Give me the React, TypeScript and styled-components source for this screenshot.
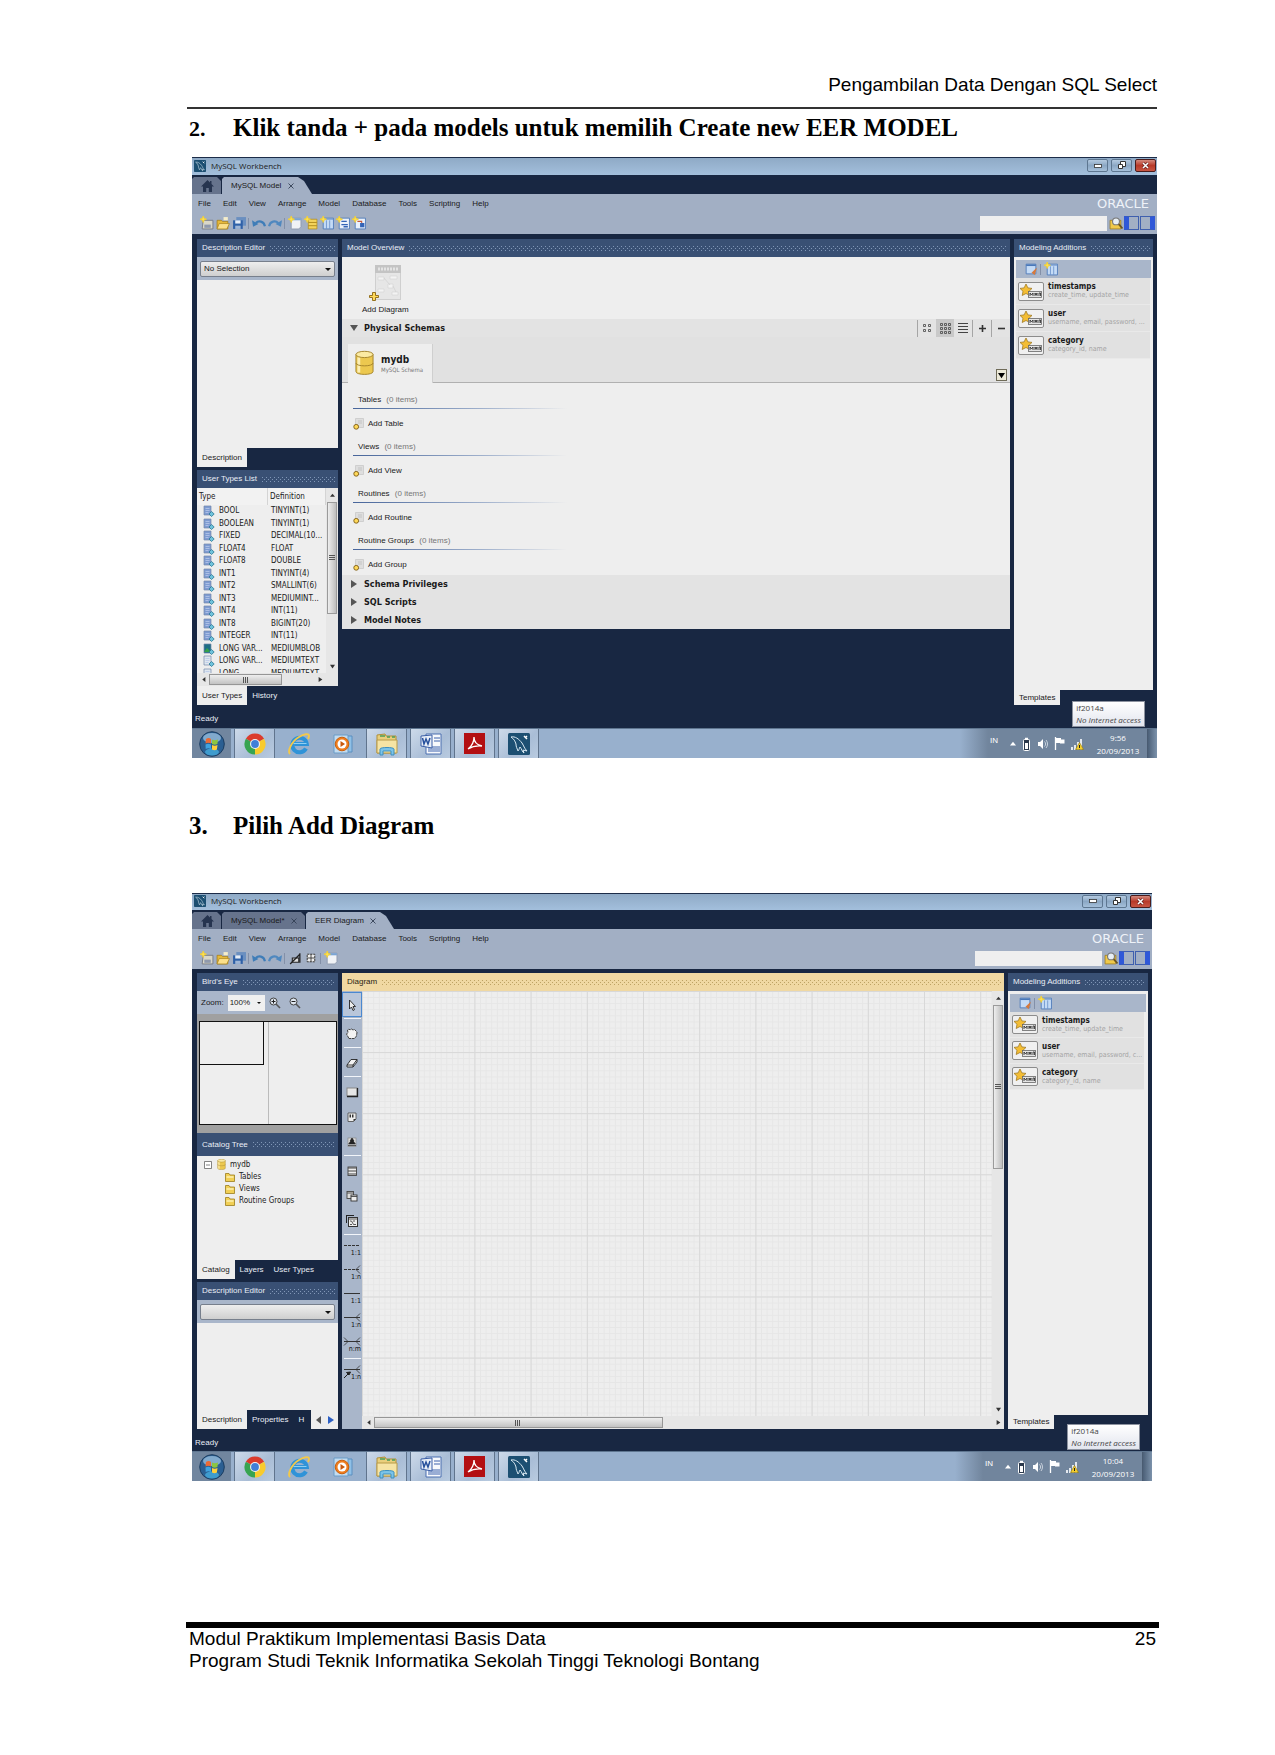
import React from "react";
import styled, { createGlobalStyle } from "styled-components";

const sans = `"Liberation Sans", Arial, sans-serif`;
const dialog = `"DejaVu Sans Condensed", "DejaVu Sans", sans-serif`;
const segoe = `"Open Sans", "Noto Sans", sans-serif`;

const Global = createGlobalStyle`
  *, *::before, *::after { box-sizing: border-box; }
  body { margin: 0; background: #fff; color: #000; }
  button, select, input { font: inherit; color: inherit; margin: 0; padding: 0; border: 0; background: none; border-radius: 0; }
  h2, p { margin: 0; }
  svg { display: block; flex: none; }
`;

/* ---------- document page ---------- */

const Page = styled.main`
  padding: 72px 118px 80px 187px;
  font-family: ${sans};
`;
const PageHeader = styled.header`
  height: 37px;
  border-bottom: 2px solid #333;
  text-align: right;
  font-size: 19px;
  line-height: 26px;
`;
const Step = styled.h2<{ $top: number; $bottom: number }>`
  display: flex;
  align-items: baseline;
  padding: ${(p) => p.$top}px 0 ${(p) => p.$bottom}px 2px;
  font: bold 25px/30px "Liberation Serif", "Times New Roman", serif;
`;
const StepNumber = styled.span<{ $small?: boolean }>`
  width: 44px;
  font-size: ${(p) => (p.$small ? 22 : 25)}px;
`;
const Figure = styled.figure<{ $right: number }>`
  margin: 0 ${(p) => p.$right}px 0 5px;
`;
const PageFooter = styled.footer`
  display: flex;
  justify-content: space-between;
  margin: 141px -2px 0 -1px;
  padding: 0 3px;
  border-top: 6px solid #000;
  font-size: 19px;
  line-height: 22px;
`;

/* ---------- application window ---------- */

const Window = styled.section`
  position: relative;
  background: #182742;
  font: 8px/12px ${sans};
  color: #1a1a1a;
`;
const TitleBar = styled.header<{ $height: number }>`
  display: flex;
  align-items: center;
  height: ${(p) => p.$height}px;
  padding: 0 1px 2px 2px;
  gap: 5px;
  border-top: 1px solid #1c2c48;
  background: linear-gradient(#8faac6, #a3bfdc);
  font: 8px/12px ${segoe};
`;
const WindowButtons = styled.div`
  display: flex;
  gap: 3px;
  margin-left: auto;
`;
const WindowButton = styled.button<{ $close?: boolean }>`
  display: grid;
  place-items: center;
  width: 21px;
  height: 13px;
  border: 1px solid ${(p) => (p.$close ? "#4a1c1c" : "#5d7690")};
  border-radius: 2px;
  background: ${(p) => (p.$close ? "linear-gradient(#d48a7e, #b83a2a 50%, #c75543)" : "linear-gradient(#b4cae0, #8ba7c4 50%, #a5c0da)")};
`;
const TabStrip = styled.nav`
  display: flex;
  align-items: flex-end;
  height: 19px;
  gap: 1px;
`;
const DocTab = styled.button<{ $active?: boolean; $width: number }>`
  display: flex;
  align-items: center;
  justify-content: space-between;
  width: ${(p) => p.$width}px;
  height: 17px;
  padding: 0 ${(p) => (p.$active ? 18 : 8)}px 0 9px;
  white-space: nowrap;
  background: ${(p) => (p.$active ? "#a2afc4" : "#66738c")};
  clip-path: ${(p) =>
    p.$active ? "polygon(0 2px, 2px 0, calc(100% - 14px) 0, calc(100% - 8px) 4px, 100% 100%, 0 100%)" : "polygon(0 2px, 2px 0, calc(100% - 4px) 0, 100% 4px, 100% 100%, 0 100%)"};
`;
const MenuBar = styled.nav`
  display: flex;
  align-items: center;
  height: 20px;
  padding-right: 8px;
  background: #a2afc4;
`;
const MenuItem = styled.button`
  padding: 0 6px;
`;
const Oracle = styled.span`
  margin-left: auto;
  font: 13px/16px "DejaVu Sans", sans-serif;
  color: #eef2f8;
`;
const Toolbar = styled.div`
  display: flex;
  align-items: center;
  height: 20px;
  padding: 0 2px 2px 8px;
  gap: 3px;
  background: #a2afc4;
`;
const ToolbarEnd = styled.div`
  display: flex;
  align-items: center;
  gap: 2px;
  margin-left: auto;
`;
const Divider = styled.i`
  width: 1px;
  height: 11px;
  background: #8390a8;
`;
const ToolButton = styled.button`
  display: grid;
  place-items: center;
  width: 13px;
  height: 14px;
`;
const Search = styled.input`
  width: 127px;
  height: 15px;
  padding: 0 4px;
  background: #efefef;
`;
const SideToggles = styled.div`
  display: flex;
  gap: 1px;
`;
const SideToggle = styled.button<{ $side: "left" | "right" }>`
  width: 15px;
  height: 14px;
  border: 1px solid #3f5fae;
  border-${(p) => p.$side}: 5px solid #2f58d8;
`;
const Workspace = styled.div<{ $top: number; $side: number }>`
  display: grid;
  grid-template-columns: 141px minmax(0, 1fr) ${(p) => p.$side}px;
  column-gap: 4px;
  align-items: start;
  padding: ${(p) => p.$top}px 4px 0 5px;
`;
const Column = styled.div`
  display: flex;
  flex-direction: column;
`;
const PanelTitle = styled.div<{ $gold?: boolean; $top?: number; $height?: number }>`
  display: flex;
  align-items: center;
  gap: 5px;
  height: ${(p) => p.$height ?? 18}px;
  margin-top: ${(p) => p.$top ?? 0}px;
  padding: 0 3px 0 5px;
  white-space: nowrap;
  color: ${(p) => (p.$gold ? "#2a2412" : "#e9eef6")};
  background: ${(p) => (p.$gold ? "#f0d8a2" : "#395074")};
  &::after {
    --dot: conic-gradient(from 270deg at 1px 1px, ${(p) => (p.$gold ? "#bda263" : "#8096b6")} 90deg, transparent 0);
    content: "";
    flex: 1;
    height: 5px;
    background: var(--dot) 0 0 / 4px 4px, var(--dot) 2px 2px / 4px 4px;
  }
`;
const Pane = styled.div<{ $height: number }>`
  height: ${(p) => p.$height}px;
  background: #eee;
`;
const SelectBar = styled.div`
  display: flex;
  height: 23px;
  padding: 4px 3px 3px;
  background: #a9b6ca;
`;
const WideSelect = styled.select`
  appearance: none;
  flex: 1;
  padding: 0 3px;
  border: 1px solid #777f8c;
  border-radius: 2px;
  background: url("data:image/svg+xml,%3Csvg xmlns='http://www.w3.org/2000/svg' width='6' height='3'%3E%3Cpath d='M0 0h6L3 3z' fill='%23111'/%3E%3C/svg%3E") no-repeat right 3px center,
    linear-gradient(#eee, #cfcfcf);
`;
const ZoomSelect = styled.select`
  appearance: none;
  width: 37px;
  height: 16px;
  padding: 0 2px;
  background: url("data:image/svg+xml,%3Csvg xmlns='http://www.w3.org/2000/svg' width='4' height='2'%3E%3Cpath d='M0 0h4L2 2z' fill='%23111'/%3E%3C/svg%3E") no-repeat right 4px center,
    #f0f0f0;
`;
const ZoomBar = styled.div`
  display: flex;
  align-items: center;
  height: 23px;
  padding: 0 4px;
  gap: 4px;
  background: #a9b6ca;
  button + button { margin-left: 4px; }
`;
const BottomTabs = styled.div`
  display: flex;
  height: 19px;
`;
const BottomTab = styled.button<{ $active?: boolean; $height?: number }>`
  height: ${(p) => p.$height ?? 19}px;
  padding: 0 5px;
  white-space: nowrap;
  color: ${(p) => (p.$active ? "#1a1a1a" : "#e9eef6")};
  background: ${(p) => (p.$active ? "#eee" : "transparent")};
`;
const TabScroller = styled.div`
  display: flex;
  align-items: center;
  justify-content: space-around;
  width: 27px;
  margin-left: auto;
  background: #eee;
`;
const StatusBar = styled.div<{ $height: number }>`
  height: ${(p) => p.$height}px;
  padding: 8px 3px 0;
  color: #e9eef6;
`;

/* ---------- user type table ---------- */

const TypesBox = styled.div`
  display: grid;
  grid-template-columns: 129px 12px;
  height: 185px;
  background: #eee;
`;
const TypesClip = styled.div`
  height: 185px;
  overflow: hidden;
`;
const TypesTable = styled.table`
  width: 129px;
  height: 192px;
  border-spacing: 0;
  table-layout: fixed;
  font: 8px/12px ${dialog};
  th { height: 17px; padding: 0 0 0 2px; text-align: left; font-weight: normal; border-right: 1px solid #d4d4d4; background: #f2f2f2; }
  th:first-child { width: 71px; }
  td { padding: 0 0 0 3px; white-space: nowrap; overflow: hidden; }
`;
const TypeName = styled.span`
  display: flex;
  align-items: center;
  gap: 4px;
  padding-left: 3px;
`;
const VTrack = styled.div`
  display: flex;
  flex-direction: column;
  align-items: center;
  justify-content: space-between;
  background: #e6e6e6;
`;
const VThumb = styled.div<{ $height: number }>`
  display: grid;
  place-items: center;
  width: 10px;
  height: ${(p) => p.$height}px;
  border: 1px solid #9b9b9b;
  background: linear-gradient(90deg, #eee, #bdbdbd);
`;
const ThumbGroup = styled.div`
  display: flex;
  flex-direction: column;
  align-items: center;
`;
const ArrowCell = styled.button<{ $w?: number }>`
  display: grid;
  place-items: center;
  width: ${(p) => p.$w ?? 12}px;
  height: 14px;
`;
const HTrack = styled.div`
  display: flex;
  align-items: center;
  height: 13px;
  background: #e6e6e6;
`;
const HThumb = styled.div<{ $width: string }>`
  display: grid;
  place-items: center;
  width: ${(p) => p.$width};
  height: 11px;
  border: 1px solid #969696;
  background: linear-gradient(#eee, #c2c2c2);
`;
const Spacer = styled.span`
  flex: 1;
`;

/* ---------- model overview ---------- */

const Overview = styled.div`
  background: #eee;
`;
const AddDiagram = styled.button`
  display: flex;
  flex-direction: column;
  align-items: center;
  height: 62px;
  padding: 8px 0 0 20px;
  gap: 3px;
`;
const SectionBar = styled.div`
  display: flex;
  align-items: center;
  height: 18px;
  padding-left: 8px;
  background: #e3e3e3;
`;
const SectionToggle = styled.button`
  display: flex;
  align-items: center;
  gap: 6px;
  font: bold 9px/12px ${dialog};
`;
const ViewModes = styled.div`
  display: flex;
  align-items: center;
  height: 18px;
  margin-left: auto;
`;
const ViewMode = styled.button<{ $on?: boolean }>`
  display: grid;
  place-items: center;
  width: 18px;
  height: 18px;
  background: ${(p) => (p.$on ? "#c9c9c9" : "none")};
`;
const Rule = styled.i`
  width: 1px;
  height: 17px;
  background: #a5a5a5;
`;
const SchemaStrip = styled.div`
  display: flex;
  align-items: flex-end;
  justify-content: space-between;
  height: 46px;
  padding: 0 3px 0 6px;
  border-bottom: 1px solid #b0b0b0;
  background: #e1e1e1;
`;
const SchemaTab = styled.button`
  display: flex;
  align-items: center;
  gap: 7px;
  width: 85px;
  height: 39px;
  margin-bottom: -1px;
  padding: 0 0 2px 7px;
  text-align: left;
  white-space: nowrap;
  border-right: 1px solid #cfcfcf;
  background: #eee;
  b { display: block; padding-top: 2px; font: bold 10px/12px ${dialog}; }
  small { display: block; font: 6px/8px ${dialog}; color: #777; }
`;
const DropButton = styled.button`
  display: grid;
  place-items: center;
  width: 11px;
  height: 12px;
  margin-bottom: 1px;
  border: 1px solid #6f6b58;
  background: #ece9d8;
`;
const ObjectGroups = styled.div`
  padding: 4px 11px 0;
`;
const ObjectGroup = styled.div`
  height: 47px;
`;
const GroupTitle = styled.div`
  height: 22px;
  padding: 7px 5px 0;
  background: linear-gradient(90deg, #47659a, #9fb0cc 60%, #eee) left bottom / 214px 1px no-repeat;
  span { margin-left: 3px; color: #777; }
`;
const AddItem = styled.button`
  display: flex;
  align-items: center;
  gap: 4px;
  height: 20px;
  margin-top: 5px;
`;

/* ---------- modeling additions ---------- */

const Additions = styled.div<{ $height: number }>`
  height: ${(p) => p.$height}px;
  padding: 3px 2px 0;
  background: #eee;
`;
const AdditionTools = styled.div`
  display: flex;
  align-items: center;
  gap: 3px;
  height: 18px;
  padding-left: 8px;
  background: #a9b6ca;
`;
const Addition = styled.button<{ $height: number }>`
  display: flex;
  align-items: center;
  gap: 4px;
  width: 134px;
  height: ${(p) => p.$height}px;
  padding: 0 0 0 2px;
  text-align: left;
  border-bottom: 1px solid #e9e9e9;
  background: #e1e1e1;
  b { display: block; font: bold 8px/9px ${dialog}; }
  small { display: block; font: 7px/9px ${dialog}; color: #a4a4a4; white-space: nowrap; }
`;

/* ---------- diagram editor ---------- */

const BirdsEye = styled.div`
  height: 119px;
  padding: 7px 1px 8px 2px;
  background: #a0a0a0;
`;
const BirdsCanvas = styled.div`
  display: grid;
  grid-template-columns: 1fr 1fr;
  height: 104px;
  border: 1px solid #111;
  background: #eee;
  &::after { content: ""; border-left: 1px solid #bbb; }
`;
const BirdsView = styled.div`
  width: 64px;
  height: 43px;
  border-right: 1px solid #111;
  border-bottom: 1px solid #111;
`;
const Tree = styled.ul`
  height: 104px;
  margin: 0;
  padding: 2px 6px;
  list-style: none;
  background: #eee;
  font: 8px/12px ${dialog};
`;
const TreeRow = styled.li<{ $level: number }>`
  display: flex;
  align-items: center;
  gap: 4px;
  height: ${(p) => (p.$level ? 12 : 13)}px;
  padding-left: ${(p) => p.$level * 22}px;
`;
const Diagram = styled.div`
  display: grid;
  grid-template-columns: 20px minmax(0, 1fr);
  height: 438px;
`;
const Palette = styled.div`
  padding-top: 1px;
  background: #a9b6ca;
`;
const PaletteTool = styled.button<{ $on?: boolean; $relation?: boolean }>`
  display: grid;
  place-items: center;
  width: 20px;
  height: ${(p) => (p.$relation ? 24 : 25)}px;
  ${(p) => p.$on && "border: 1px solid #4a88d0; background: #b9c6da;"}
`;
const PaletteRule = styled.hr`
  height: 1px;
  margin: 1px 1px 2px 2px;
  border: 0;
  background: #f2f5fa;
`;
const CanvasArea = styled.div`
  display: grid;
  grid-template-columns: minmax(0, 1fr) 12px;
  grid-template-rows: minmax(0, 1fr) 13px;
  background: #e6e6e6;
  ${HTrack} { grid-column: 1 / 3; }
`;
const Canvas = styled.div`
  background: #eee;
  overflow: hidden;
  svg { width: 100%; height: 100%; }
`;

/* ---------- windows taskbar ---------- */

const Taskbar = styled.footer`
  display: flex;
  height: 30px;
  border-top: 1px solid #5f7690;
  background: #98b0cd;
`;
const StartButton = styled.button`
  display: grid;
  place-items: center;
  width: 39px;
  height: 29px;
  margin-right: 3px;
  background: #71869f;
`;
const TaskButton = styled.button<{ $open?: boolean }>`
  display: grid;
  place-items: center;
  width: 41px;
  height: 29px;
  margin-right: 3px;
  ${(p) => p.$open && "border: 1px solid #60748d; border-width: 0 1px; background: linear-gradient(135deg, #cddaea, #a9bdd6 60%, #b9cbe0);"}
`;
const Tray = styled.div`
  display: flex;
  align-items: center;
  gap: 6px;
  margin-left: auto;
  padding-left: 30px;
  background: linear-gradient(90deg, #98b0cd, #71859d 28px);
  color: #fff;
`;
const Language = styled.span`
  padding: 0 6px 6px 0;
`;
const Clock = styled.time`
  width: 46px;
  margin-left: 5px;
  text-align: center;
  font: 8px/13px ${segoe};
`;
const ShowDesktop = styled.button`
  width: 10px;
  height: 29px;
  border-left: 1px solid #4a5c72;
  background: linear-gradient(90deg, #4c6078, #7c92ab);
`;
const NetworkTip = styled.div`
  position: absolute;
  right: 12px;
  bottom: 31px;
  padding: 0 3px;
  border: 1px solid #8d93a0;
  background: linear-gradient(#fff, #e2e5ee);
  color: #444;
  font: 8px/12px ${segoe};
  white-space: nowrap;
`;

/* ---------- drawings ---------- */

const Dolphin = ({ size }: { size: number }) => (
  <svg width={size} height={size} viewBox="0 0 22 22">
    <rect width="22" height="22" rx="1.500" fill="#1c4f72" />
    <path d="M3 4c4-1 8 2 11 6 2 3 2 5 5 8l-4-1 1 3c-2-1-2-4-4-6-1 2-1 3-2 4-1-3-2-4-2-7C7 8 6 6 3 4z" fill="none" stroke="#d9e9f2" strokeWidth="1" />
    <path d="M16 3l3 3M17 5l2-2" stroke="#fff" strokeWidth="1.500" />
  </svg>
);
const Home = () => (
  <svg width="13" height="12" viewBox="0 0 13 12"><path d="M6.500 0L0 6.500h2V12h3.200V8h2.600v4H11V6.500h2L10.500 4V1H9v1.500z" fill="#26344f" /></svg>
);
const Cross = () => (
  <svg width="6" height="6" viewBox="0 0 6 6"><path d="M.5.5l5 5M5.500.5l-5 5" stroke="#333f55" strokeWidth=".9" /></svg>
);
const Spark = () => <path d="M3 0l.8 2.200L6 3l-2.200.8L3 6l-.8-2.200L0 3l2.200-.8z" fill="#ffe14d" stroke="#f2cf35" strokeWidth=".8" />;

type Glyph = "new" | "open" | "save" | "undo" | "redo" | "page" | "schema" | "table" | "view" | "routine" | "pen" | "grid" | "find" | "edit";
const glyphs: Record<Glyph, React.ReactNode> = {
  new: <><path d="M3 4h9v8H2z" fill="#d9d7c8" stroke="#6f7380" strokeWidth=".8" /><path d="M4 8h6v3H4z" fill="#8f99ad" /><Spark /></>,
  open: <><path d="M1 4h4l1 1h5v7H1z" fill="#e6b93a" stroke="#a47c16" strokeWidth=".7" /><path d="M3 7h9.500l-2.500 5H1z" fill="#fbe08a" stroke="#a47c16" strokeWidth=".6" /><path d="M7 1h4v3H7z" fill="#f5edca" /></>,
  save: <><rect x="4" y="1" width="9" height="8" fill="#6a8fc0" /><path d="M1 4h9v8H1z" fill="#2f61a8" /><path d="M3 4h5v3H3z" fill="#e5edf7" /><path d="M3 9h5v3H3z" fill="#9fb6d6" /></>,
  undo: <><path d="M12 9.500C11 4.500 6 4 3.500 6.500" fill="none" stroke="#3f7db8" strokeWidth="2" /><path d="M0 4l1 6 5-2.500z" fill="#3f7db8" /></>,
  redo: <><path d="M1 9.500C2 4.500 7 4 9.500 6.500" fill="none" stroke="#4f88bf" strokeWidth="2" /><path d="M13 4l-1 6-5-2.500z" fill="#4f88bf" /></>,
  page: <><path d="M3 2h9v8l-2 2H3z" fill="#f1f3f6" stroke="#8793a8" strokeWidth=".7" /><path d="M3 2h9v2H3z" fill="#7ba4d3" /><Spark /></>,
  schema: <><path d="M4 3h8v9H4z" fill="#f3d35a" stroke="#b28c1e" strokeWidth=".7" /><path d="M4 6h8M4 9h8" stroke="#b28c1e" strokeWidth=".9" /><Spark /></>,
  table: <><path d="M3 2h9.500v10H3z" fill="#c4dbf6" stroke="#4a78b8" strokeWidth=".8" /><path d="M3 3h9.500M6 4v8M9 4v8" stroke="#6c93cb" strokeWidth=".8" /><Spark /></>,
  view: <><path d="M3 2h9.500v10H3z" fill="#eaf1fb" stroke="#4a78b8" strokeWidth=".8" /><path d="M5 5h5M5 8h6M7 10h4" stroke="#3464b6" strokeWidth="1.300" /><Spark /></>,
  routine: <><path d="M3 2h9.500v10H3z" fill="#eaf1fb" stroke="#4a78b8" strokeWidth=".8" /><path d="M5 5h4v2" fill="none" stroke="#c45a3a" /><rect x="7.500" y="6.500" width="4" height="4" fill="#3464b6" /><Spark /></>,
  pen: <><path d="M4 6.500h6v4H4z" fill="#ddd" stroke="#222" /><path d="M2 12l9-9M11 2v9" fill="none" stroke="#222" strokeWidth="1.200" /></>,
  grid: <><path d="M3 3h7v7H3z" fill="#eee" stroke="#333" strokeWidth=".9" strokeDasharray="2 .8" /><path d="M6.500 3v7M3 6.500h7" stroke="#333" strokeWidth=".8" /></>,
  find: <><path d="M1 4h10v8H1z" fill="#f0c94a" stroke="#9c7a1a" strokeWidth=".7" /><circle cx="6.500" cy="5" r="3.200" fill="#e7eff5" stroke="#777" /><path d="M9 7.500l3.500 4" stroke="#6b5520" strokeWidth="1.600" /></>,
  edit: <><path d="M2 2h9v9H2z" fill="#c4dbf6" stroke="#4a78b8" strokeWidth=".8" /><path d="M2 3h9" stroke="#4a78b8" strokeWidth="1.500" /><path d="M12 5L7 10l3 2z" fill="#d7793b" /></>,
};
const Tool = ({ name, label }: { name: Glyph; label: string }) => (
  <ToolButton aria-label={label}><svg width="14" height="14" viewBox="0 0 13 13">{glyphs[name]}</svg></ToolButton>
);
const Tri = ({ dir, size = 5, color = "#333" }: { dir: "up" | "down" | "left" | "right"; size?: number; color?: string }) => {
  const d = { up: "M0 6L4 1l4 5z", down: "M0 1h8L4 7z", left: "M7 0v8L2 4z", right: "M1 0v8l6-4z" }[dir];
  return <svg width={size} height={size} viewBox="0 0 8 8"><path d={d} fill={color} /></svg>;
};
const Grip = ({ vertical }: { vertical?: boolean }) => (
  <svg width="6" height="6" viewBox="0 0 6 6"><path d={vertical ? "M0 .5h6M0 2.500h6M0 4.500h6" : "M.5 0v6M2.500 0v6M4.500 0v6"} stroke="#555" strokeWidth="1" /></svg>
);
const DiagramSheet = () => (
  <svg width="34" height="36" viewBox="0 0 34 36">
    <rect x="7.500" y=".5" width="25" height="34" fill="#e6e6e6" stroke="#cfcfcf" />
    <rect x="7" y="0" width="26" height="8" fill="#c4c4c4" />
    <path d="M10 4h20" stroke="#e4e4e4" strokeWidth="3" strokeDasharray="2 1" />
    <path d="M10 12h6v3h-6zM22 11h7v3h-7zM20 19h5v4h-5zM10 24h6v3h-6zM24 27h6v3h-6z" fill="#f3f3f3" stroke="#d3d3d3" strokeWidth=".6" />
    <path d="M16 13l6 7M25 21l3 6" stroke="#d0d0d0" strokeWidth=".7" />
    <path d="M4.500 28.500h3v3h3v2h-3v3h-3v-3h-3v-2h3z" fill="#ffd95a" stroke="#8a6410" strokeWidth=".9" transform="translate(0 -1)" />
  </svg>
);
const Cylinder = ({ width, height }: { width: number; height: number }) => (
  <svg width={width} height={height} viewBox="0 0 20 26">
    <path d="M1 4v18c0 4 18 4 18 0V4z" fill="#ecc84f" stroke="#a4842a" />
    <path d="M4 7v16" stroke="#fbeeb5" strokeWidth="3" />
    <ellipse cx="10" cy="4" rx="9" ry="3.300" fill="#fbeaa2" stroke="#a4842a" />
    <path d="M1 13c0 4 18 4 18 0" fill="none" stroke="#a4842a" />
  </svg>
);
const AddMark = () => (
  <svg width="11" height="12" viewBox="0 0 11 12">
    <path d="M2.500.5h8v9h-8z" fill="#dedede" stroke="#cfcfcf" /><path d="M5 3h4M5 5h4" stroke="#c4c4c4" />
    <circle cx="3.200" cy="8.800" r="2.400" fill="#ffd95a" stroke="#7d5a10" strokeWidth=".9" />
  </svg>
);
const TypeMark = ({ kind }: { kind: string }) => (
  <svg width="12" height="12" viewBox="0 0 12 12">
    <path d="M1 1h7v9H1z" fill={kind === "blob" ? "#1f6f86" : kind === "text" ? "#dfe7ef" : "#7f9cd2"} stroke="#7488ab" strokeWidth=".7" />
    {kind === "blob" ? <path d="M1 9l3-4 4 4z" fill="#37a24a" /> : <path d="M2.500 3.500h4M2.500 5.500h4M2.500 7.500h3" stroke="#b7c8e8" strokeWidth=".8" />}
    <path d="M8.500 6.500l2.700 2.500-2.700 2.500L6 9z" fill="#6fc3dc" stroke="#1d6f8c" strokeWidth=".7" />
  </svg>
);
const StarCard = () => (
  <svg width="26" height="19" viewBox="0 0 26 19">
    <rect x=".5" y=".5" width="25" height="18" rx="1.500" fill="#f0f0f0" stroke="#8c8c8c" />
    <path d="M8 2l1.900 3.900 4.100.5-3 2.900.8 4.200L8 11.500l-3.800 2 .8-4.200-3-2.900 4.100-.5z" fill="#f3bd35" stroke="#966e14" strokeWidth=".7" />
    <rect x="10.500" y="9.500" width="13" height="6" fill="#e4e4e4" stroke="#666" strokeWidth=".8" />
    <path d="M12 14v-3l1.500 2 1.500-2v3M17 14v-3l1 2 1-2v3M21 14v-3h1.500v3" fill="none" stroke="#222" strokeWidth=".8" />
  </svg>
);
const Magnifier = ({ plus }: { plus?: boolean }) => (
  <svg width="12" height="12" viewBox="0 0 12 12"><circle cx="4.500" cy="4.500" r="3.500" fill="#dfe6ef" stroke="#444" /><path d={plus ? "M2.500 4.500h4M4.500 2.500v4" : "M2.500 4.500h4"} stroke="#222" /><path d="M7 7l4 4" stroke="#555" strokeWidth="1.600" /></svg>
);
const Folder = () => (
  <svg width="10" height="10" viewBox="0 0 10 10"><path d="M.5 1.500h3.500l1 1.500h4.500v6.500h-9z" fill="#f1cf55" stroke="#9a7c1c" strokeWidth=".8" /><path d="M1.500 5h7" stroke="#fdf0b0" strokeWidth="1.500" /></svg>
);

const paletteDrawings: React.ReactNode[] = [
  <path d="M5.500 3v9l2-2 1.500 3.500 1.500-.8L9 9.500h2.500z" fill="#eee" stroke="#222" strokeWidth=".9" />,
  <path d="M5 12.500L2.500 8l1.500-1.500L3.500 4 5 3l1 1 1.500-1L9 4l1.500-.5L12 5l1 1-.5 4-2 2.500z" fill="#f3f3f3" stroke="#333" strokeWidth=".9" strokeDasharray="3 .6" />,
  <path d="M3 10l4-5.500h6L9 10zM3 10v2h6v-2M9 12l4-5V4.500" fill="#f3f3f3" stroke="#222" strokeWidth=".9" />,
  <><rect x="3" y="4" width="10" height="8" fill="#e6e6e6" stroke="#888" /><path d="M3 12.500h10.500V4" stroke="#222" strokeWidth="1.300" fill="none" /></>,
  <><path d="M4 4h8v6l-2.500 2.500H4z" fill="#eee" stroke="#555" strokeWidth=".9" /><path d="M5.500 5.500h1.500v3H5.500zM8 5.500h1.500v3H8zM9.500 12.500V10H12" fill="#333" /></>,
  <><rect x="4" y="4" width="8" height="8.500" fill="#ddd" stroke="#888" strokeWidth=".7" /><path d="M8 4l2 3H9.300l2 3H4.700l2-3H6zM4 11.500h8" fill="#222" stroke="#222" strokeWidth=".7" /></>,
  <><rect x="4" y="4" width="8.500" height="8.500" fill="#eee" stroke="#444" strokeWidth=".9" /><path d="M4 5h8.500M4 8h8.500M4 11h8.500" stroke="#444" /></>,
  <><rect x="3" y="3.500" width="6.500" height="7" fill="#ddd" stroke="#444" strokeWidth=".9" /><rect x="7" y="7" width="6" height="6" fill="#eee" stroke="#333" strokeWidth=".9" /><path d="M7 8.500h6M3 5h6" stroke="#444" strokeWidth=".9" /></>,
  <><path d="M2 2.500h8M2.500 2v8" stroke="#222" /><rect x="4.500" y="4.500" width="9" height="9" fill="#eee" stroke="#333" /><path d="M4.500 6h9M6 8h1.500l2 3.500H12M6 11.500h2M9 8h2" stroke="#333" strokeWidth=".8" fill="none" /></>,
];
type Relation = { label: string; dashed?: boolean; many?: boolean; both?: boolean; picker?: boolean };
const relations: Relation[] = [
  { label: "1:1", dashed: true },
  { label: "1:n", dashed: true, many: true },
  { label: "1:1" },
  { label: "1:n", many: true },
  { label: "n:m", many: true, both: true },
];
const RelationMark = ({ label, dashed, many, both, picker }: Relation) => (
  <svg width="18" height="18" viewBox="0 0 18 18">
    <path d="M1 5.500h16" stroke="#333" strokeWidth="1" strokeDasharray={dashed ? "3 1" : undefined} />
    {many && <path d="M17 1.500l-4 4 4 4" fill="none" stroke="#333" strokeWidth=".8" />}
    {both && <path d="M1 1.500l4 4-4 4" fill="none" stroke="#333" strokeWidth=".8" />}
    {picker && <path d="M1 14l4-4M3.500 8.500L6 11l1.500-3z" stroke="#222" fill="#222" />}
    <text x="18" y="15" textAnchor="end" fontFamily="DejaVu Sans Condensed, sans-serif" fontSize="7" fill="#111">{label}</text>
  </svg>
);

const Orb = () => (
  <svg width="26" height="26" viewBox="0 0 26 26">
    <circle cx="13" cy="13" r="12.300" fill="#2b5f92" stroke="#1d3d60" /><ellipse cx="13" cy="7" rx="9" ry="5" fill="#9fc3e0" opacity=".75" /><ellipse cx="13" cy="21" rx="7" ry="3.500" fill="#49b6e8" opacity=".7" />
    <path d="M7 8c2-1.300 3.500-1.200 5 0v4.500c-1.800-1-3.500-1-5.500 0z" fill="#ea6a35" /><path d="M13 8.500c2 1 3.500 1 6 0l-.6 4.500c-2 1-3.500 1-5.400 0z" fill="#8cc63f" />
    <path d="M6.500 13.500c2-1.200 3.700-1 5.500 0V18c-1.800-1-3.500-1-5.300 0z" fill="#3fa3e0" /><path d="M13 14c2 1 3.700 1 5.500 0l-.6 4.500c-1.800 1-3.200.8-4.900 0z" fill="#ffcf3a" />
  </svg>
);
const Chrome = () => (
  <svg width="22" height="22" viewBox="0 0 22 22">
    <path d="M11 11L1.900 5.700A10.500 10.500 0 0 1 20.100 5.800z" fill="#db3b2c" /><path d="M11 11L20.100 5.700A10.500 10.500 0 0 1 11 21.500z" fill="#f8cb2e" /><path d="M11 11v10.500A10.500 10.500 0 0 1 1.900 5.700z" fill="#37a451" />
    <circle cx="11" cy="11" r="5" fill="#f2f2f2" /><circle cx="11" cy="11" r="3.900" fill="#3f7fd8" />
  </svg>
);
const Explorer = () => (
  <svg width="24" height="24" viewBox="0 0 24 24">
    <path d="M19 16.500a7.300 7.300 0 1 1 .8-4.500H7.500" fill="none" stroke="#2f93d8" strokeWidth="4" /><path d="M6.500 11.500h13" stroke="#8fd0f2" strokeWidth="1" />
    <path d="M3 22C0 19 5 9 12 5c5-3 10-4 10-1 0 1-.5 2-1 3" fill="none" stroke="#f2c84b" strokeWidth="1.900" />
  </svg>
);
const Player = () => (
  <svg width="20" height="20" viewBox="0 0 20 20"><path d="M5 2h14v16H5z" fill="#8fc0e6" stroke="#5a8fc0" /><path d="M1 1h14v18H1z" fill="#c3dcf0" stroke="#6b9cc7" /><circle cx="9" cy="10" r="6.800" fill="#ef7d1e" stroke="#c95f0c" /><circle cx="9" cy="10" r="4.500" fill="#fff" /><path d="M7.500 7l4.500 3-4.500 3z" fill="#c9580c" /></svg>
);
const Files = () => (
  <svg width="24" height="24" viewBox="0 0 24 24"><path d="M2 3l8-1 1 2h10v17H2z" fill="#e9cf7c" stroke="#b08f3a" /><path d="M5 4h5M12 5h3M17 5h3" stroke="#4a9d5a" strokeWidth="1.500" /><path d="M2 8h20v13H2z" fill="#f6e4a4" stroke="#b89a48" /><path d="M5 23v-6c0-2 14-2 14 0v6h-3v-4H8v4z" fill="#7cc4e8" stroke="#3c8fc0" /></svg>
);
const Word = () => (
  <svg width="22" height="22" viewBox="0 0 22 22"><path d="M6 1h15v20H6z" fill="#f7f9fc" stroke="#4a6fb0" /><path d="M14 5h6M14 8h6M8 14h12M8 16h12M8 18h12" stroke="#3c62ad" strokeWidth="1" /><path d="M1 3l11-1v13L1 13z" fill="#e8eef8" stroke="#3a5ea6" /><path d="M2.500 5l1.500 6 2-5 2 5 2-6" fill="none" stroke="#27509c" strokeWidth="1.500" /></svg>
);
const Acrobat = () => (
  <svg width="21" height="21" viewBox="0 0 21 21"><path d="M0 0h21v21H0z" fill="#b30f12" /><path d="M4 16c4-3 6-7 6-12 0 5 3 8 8 9-5-.6-10 .5-14 3z" fill="none" stroke="#fff" strokeWidth="1.300" /></svg>
);
const Battery = () => <svg width="9" height="14" viewBox="0 0 9 14"><rect x="1.500" y="2.500" width="6" height="11" rx="1" fill="#2b394c" stroke="#fff" /><path d="M3 .8h3v1.500H3zM3 6h3v6H3z" fill="#fff" /></svg>;
const Speaker = () => <svg width="11" height="12" viewBox="0 0 11 12"><path d="M1 4h2l3-3v10L3 8H1z" fill="#fff" /><path d="M7.500 3.500c1.500 1.500 1.500 3.500 0 5M9 2c2 2.500 2 5.500 0 8" stroke="#dfe6ee" fill="none" strokeWidth=".8" /></svg>;
const Flag = () => <svg width="11" height="13" viewBox="0 0 11 13"><path d="M1.500 0v13" stroke="#fff" strokeWidth="1.300" /><path d="M2 1h5v1.500h3.500v4H6V6H2z" fill="#fff" /></svg>;
const Signal = () => <svg width="13" height="12" viewBox="0 0 13 12"><path d="M0 9h2v3H0zM3 7h2v5H3zM6 4h2v8H6zM9 1h2v11H9z" fill="#e3e8ee" /><path d="M8.500 4.500l4 7h-8z" fill="#f5cf2c" stroke="#92760c" strokeWidth=".6" /><path d="M8.500 7v3" stroke="#222" /></svg>;

/* ---------- shared window parts ---------- */

const AppTitle = ({ height }: { height: number }) => (
  <TitleBar $height={height}>
    <Dolphin size={12} />
    <span>MySQL Workbench</span>
    <WindowButtons>
      <WindowButton aria-label="Minimize"><svg width="8" height="4" viewBox="0 0 8 4"><rect x=".5" y=".5" width="7" height="3" fill="#fff" stroke="#333" strokeWidth=".8" /></svg></WindowButton>
      <WindowButton aria-label="Restore"><svg width="10" height="9" viewBox="0 0 10 9"><path d="M3.500.5h5v5h-5z" fill="#fff" stroke="#333" /><path d="M1.500 3.500h4v4h-4z" fill="#fff" stroke="#333" /></svg></WindowButton>
      <WindowButton $close aria-label="Close"><svg width="7" height="7" viewBox="0 0 7 7"><path d="M1 1l5 5M6 1L1 6" stroke="#5a1a1a" strokeWidth="2.800" /><path d="M1 1l5 5M6 1L1 6" stroke="#fff" strokeWidth="1.600" /></svg></WindowButton>
    </WindowButtons>
  </TitleBar>
);
const menus = ["File", "Edit", "View", "Arrange", "Model", "Database", "Tools", "Scripting", "Help"];
const Menus = () => (
  <MenuBar>
    {menus.map((m) => <MenuItem key={m}>{m}</MenuItem>)}
    <Oracle>ORACLE</Oracle>
  </MenuBar>
);
const Tools = ({ extra }: { extra: React.ReactNode }) => (
  <Toolbar>
    <Tool name="new" label="New model" />
    <Tool name="open" label="Open model" />
    <Tool name="save" label="Save model" />
    <Divider />
    <Tool name="undo" label="Undo" />
    <Tool name="redo" label="Redo" />
    <Divider />
    {extra}
    <ToolbarEnd>
      <Search aria-label="Search" />
      <Tool name="find" label="Find" />
      <SideToggles>
        <SideToggle $side="left" aria-label="Toggle left sidebar" />
        <SideToggle $side="right" aria-label="Toggle right sidebar" />
      </SideToggles>
    </ToolbarEnd>
  </Toolbar>
);
const AdditionsPanel = ({ height, row, tab, userFields }: { height: number; row: number; tab: number; userFields: string }) => (
  <Column>
    <PanelTitle>Modeling Additions</PanelTitle>
    <Additions $height={height}>
      <AdditionTools>
        <Tool name="edit" label="Edit template" />
        <Divider />
        <Tool name="table" label="New template" />
      </AdditionTools>
      {[["timestamps", "create_time, update_time"], ["user", userFields], ["category", "category_id, name"]].map(([name, fields]) => (
        <Addition key={name} $height={row}><StarCard /><span><b>{name}</b><small>{fields}</small></span></Addition>
      ))}
    </Additions>
    <div><BottomTab $active $height={tab}>Templates</BottomTab></div>
  </Column>
);
const Desktop = ({ time }: { time: string }) => (
  <Taskbar>
    <StartButton aria-label="Start"><Orb /></StartButton>
    <TaskButton $open aria-label="Chrome"><Chrome /></TaskButton>
    <TaskButton aria-label="Internet Explorer"><Explorer /></TaskButton>
    <TaskButton aria-label="Media Player"><Player /></TaskButton>
    <TaskButton $open aria-label="Explorer"><Files /></TaskButton>
    <TaskButton $open aria-label="Word"><Word /></TaskButton>
    <TaskButton $open aria-label="Adobe Reader"><Acrobat /></TaskButton>
    <TaskButton $open aria-label="MySQL Workbench"><Dolphin size={22} /></TaskButton>
    <Tray>
      <Language>IN</Language>
      <Tri dir="up" size={6} color="#fff" />
      <Battery /><Speaker /><Flag /><Signal />
      <Clock>{time}<br />20/09/2013</Clock>
      <ShowDesktop aria-label="Show desktop" />
    </Tray>
  </Taskbar>
);
const Tip = () => <NetworkTip role="tooltip">if2014a<br /><em>No Internet access</em></NetworkTip>;

/* ---------- first window ---------- */

const types = [
  ["BOOL", "TINYINT(1)"], ["BOOLEAN", "TINYINT(1)"], ["FIXED", "DECIMAL(10..."], ["FLOAT4", "FLOAT"], ["FLOAT8", "DOUBLE"],
  ["INT1", "TINYINT(4)"], ["INT2", "SMALLINT(6)"], ["INT3", "MEDIUMINT..."], ["INT4", "INT(11)"], ["INT8", "BIGINT(20)"],
  ["INTEGER", "INT(11)"], ["LONG VAR...", "MEDIUMBLOB", "blob"], ["LONG VAR...", "MEDIUMTEXT", "text"], ["LONG", "MEDIUMTEXT", "text"],
];
const groups = [["Tables", "Add Table"], ["Views", "Add View"], ["Routines", "Add Routine"], ["Routine Groups", "Add Group"]];

const ModelWindow = () => (
  <Window>
    <AppTitle height={18} />
    <TabStrip>
      <DocTab $width={29} aria-label="Home"><Home /></DocTab>
      <DocTab $active $width={90}>MySQL Model<Cross /></DocTab>
    </TabStrip>
    <Menus />
    <Tools
      extra={<>
        <Tool name="page" label="New diagram" /><Tool name="schema" label="New schema" /><Tool name="table" label="New table" />
        <Tool name="view" label="New view" /><Tool name="routine" label="New routine" />
      </>}
    />
    <Workspace $top={5} $side={139}>
      <Column>
        <PanelTitle>Description Editor</PanelTitle>
        <SelectBar><WideSelect aria-label="Selection"><option>No Selection</option></WideSelect></SelectBar>
        <Pane $height={168} />
        <BottomTabs><BottomTab $active>Description</BottomTab></BottomTabs>
        <PanelTitle $top={3}>User Types List</PanelTitle>
        <TypesBox>
          <TypesClip>
            <TypesTable>
              <thead><tr><th>Type</th><th>Definition</th></tr></thead>
              <tbody>
                {types.map(([name, def, kind], i) => (
                  <tr key={i}><td><TypeName><TypeMark kind={kind ?? "num"} />{name}</TypeName></td><td>{def}</td></tr>
                ))}
              </tbody>
            </TypesTable>
          </TypesClip>
          <VTrack>
            <ThumbGroup>
              <ArrowCell aria-label="Scroll up"><Tri dir="up" /></ArrowCell>
              <VThumb $height={112}><Grip vertical /></VThumb>
            </ThumbGroup>
            <ArrowCell aria-label="Scroll down"><Tri dir="down" /></ArrowCell>
          </VTrack>
        </TypesBox>
        <HTrack>
          <ArrowCell aria-label="Scroll left"><Tri dir="left" /></ArrowCell>
          <HThumb $width="73px"><Grip /></HThumb>
          <Spacer />
          <ArrowCell $w={36} aria-label="Scroll right"><Tri dir="right" /></ArrowCell>
        </HTrack>
        <BottomTabs><BottomTab $active>User Types</BottomTab><BottomTab>History</BottomTab></BottomTabs>
      </Column>
      <Column>
        <PanelTitle>Model Overview</PanelTitle>
        <Overview>
          <AddDiagram><DiagramSheet />Add Diagram</AddDiagram>
          <SectionBar>
            <SectionToggle><Tri dir="down" size={8} color="#555" />Physical Schemas</SectionToggle>
            <ViewModes>
              <Rule />
              <ViewMode aria-label="Large icons"><svg width="9" height="9" viewBox="0 0 9 9"><path d="M.5.5h2v2h-2zM5.500.5h2v2h-2zM.5 5.500h2v2h-2zM5.500 5.500h2v2h-2z" fill="none" stroke="#444" strokeWidth=".8" /></svg></ViewMode>
              <ViewMode $on aria-label="Small icons"><svg width="11" height="11" viewBox="0 0 11 11"><path d="M.5.5h2v2h-2zM4.500.5h2v2h-2zM8.500.5h2v2h-2zM.5 4.500h2v2h-2zM4.500 4.500h2v2h-2zM8.500 4.500h2v2h-2zM.5 8.500h2v2h-2zM4.500 8.500h2v2h-2zM8.500 8.500h2v2h-2z" fill="none" stroke="#444" strokeWidth=".8" /></svg></ViewMode>
              <ViewMode aria-label="List"><svg width="10" height="11" viewBox="0 0 10 11"><path d="M0 .5h10M0 3.500h10M0 6.500h10M0 9.500h10" stroke="#444" strokeWidth="1" /></svg></ViewMode>
              <Rule />
              <ViewMode aria-label="Add schema"><svg width="7" height="7" viewBox="0 0 7 7"><path d="M0 3.500h7M3.500 0v7" stroke="#333" strokeWidth="1.600" /></svg></ViewMode>
              <Rule />
              <ViewMode aria-label="Remove schema"><svg width="7" height="7" viewBox="0 0 7 7"><path d="M0 3.500h7" stroke="#333" strokeWidth="1.600" /></svg></ViewMode>
            </ViewModes>
          </SectionBar>
          <SchemaStrip>
            <SchemaTab><Cylinder width={19} height={26} /><span><b>mydb</b><small>MySQL Schema</small></span></SchemaTab>
            <DropButton aria-label="Schema list"><Tri dir="down" size={7} color="#000" /></DropButton>
          </SchemaStrip>
          <ObjectGroups>
            {groups.map(([title, add]) => (
              <ObjectGroup key={title}>
                <GroupTitle>{title} <span>(0 items)</span></GroupTitle>
                <AddItem><AddMark />{add}</AddItem>
              </ObjectGroup>
            ))}
          </ObjectGroups>
          {["Schema Privileges", "SQL Scripts", "Model Notes"].map((s) => (
            <SectionBar key={s}><SectionToggle><Tri dir="right" size={8} color="#555" />{s}</SectionToggle></SectionBar>
          ))}
        </Overview>
      </Column>
      <AdditionsPanel height={433} row={27} tab={15} userFields="username, email, password, ..." />
    </Workspace>
    <StatusBar $height={23}>Ready</StatusBar>
    <Desktop time="9:56" />
    <Tip />
  </Window>
);

/* ---------- second window ---------- */

const DiagramGrid = () => (
  <svg>
    <defs>
      <pattern id="minor" width="5.620" height="6.110" patternUnits="userSpaceOnUse"><path d="M.5 0v6.110M0 .5h5.620" stroke="#e6e6e6" strokeWidth=".9" /></pattern>
      <pattern id="major" width="56.200" height="61.100" patternUnits="userSpaceOnUse"><path d="M.5 0v61.100M0 .5h56.200" stroke="#d8d8d8" /></pattern>
    </defs>
    <rect width="100%" height="100%" fill="url(#minor)" />
    <rect width="100%" height="100%" fill="url(#major)" />
  </svg>
);
const paletteNames = ["Select", "Hand", "Eraser", "Layer", "Note", "Image", "Table", "View", "Routine group"];
const ruleAfter = [0, 1, 2, 5, 8];

const DiagramWindow = () => (
  <Window>
    <AppTitle height={17} />
    <TabStrip>
      <DocTab $width={29} aria-label="Home"><Home /></DocTab>
      <DocTab $width={83}>MySQL Model*<Cross /></DocTab>
      <DocTab $active $width={88}>EER Diagram<Cross /></DocTab>
    </TabStrip>
    <Menus />
    <Tools extra={<><Tool name="pen" label="Toggle notation" /><Tool name="grid" label="Toggle grid" /><Divider /><Tool name="page" label="New diagram" /></>} />
    <Workspace $top={4} $side={140}>
      <Column>
        <PanelTitle>Bird's Eye</PanelTitle>
        <ZoomBar>
          <label htmlFor="zoom">Zoom:</label>
          <ZoomSelect id="zoom"><option>100%</option></ZoomSelect>
          <button aria-label="Zoom in"><Magnifier plus /></button>
          <button aria-label="Zoom out"><Magnifier /></button>
        </ZoomBar>
        <BirdsEye><BirdsCanvas><BirdsView /></BirdsCanvas></BirdsEye>
        <PanelTitle $height={23}>Catalog Tree</PanelTitle>
        <Tree>
          <TreeRow $level={0}>
            <svg width="10" height="10" viewBox="0 0 10 10"><path d="M1.500 1.500h7v7h-7zM3 5h4" fill="#fff" stroke="#666" strokeWidth=".8" /></svg>
            <Cylinder width={9} height={11} />mydb
          </TreeRow>
          {["Tables", "Views", "Routine Groups"].map((t) => <TreeRow key={t} $level={1}><Folder />{t}</TreeRow>)}
        </Tree>
        <BottomTabs><BottomTab $active>Catalog</BottomTab><BottomTab>Layers</BottomTab><BottomTab>User Types</BottomTab></BottomTabs>
        <PanelTitle $top={3}>Description Editor</PanelTitle>
        <SelectBar><WideSelect aria-label="Object"><option></option></WideSelect></SelectBar>
        <Pane $height={87} />
        <BottomTabs>
          <BottomTab $active>Description</BottomTab><BottomTab>Properties</BottomTab><BottomTab aria-label="History">H</BottomTab>
          <TabScroller>
            <button aria-label="Previous tab"><Tri dir="left" size={8} color="#555" /></button>
            <button aria-label="Next tab"><Tri dir="right" size={8} color="#2c5fc4" /></button>
          </TabScroller>
        </BottomTabs>
      </Column>
      <Column>
        <PanelTitle $gold>Diagram</PanelTitle>
        <Diagram>
          <Palette>
            {paletteDrawings.map((drawing, i) => (
              <React.Fragment key={i}>
                <PaletteTool $on={i === 0} aria-label={paletteNames[i]}><svg width="16" height="16" viewBox="0 0 16 16">{drawing}</svg></PaletteTool>
                {ruleAfter.includes(i) && <PaletteRule />}
              </React.Fragment>
            ))}
            {relations.map((r, i) => <PaletteTool key={i} $relation><RelationMark {...r} /></PaletteTool>)}
            <PaletteRule />
            <PaletteTool $relation><RelationMark label="1:n" many picker /></PaletteTool>
          </Palette>
          <CanvasArea>
            <Canvas><DiagramGrid /></Canvas>
            <VTrack>
              <ThumbGroup>
                <ArrowCell aria-label="Scroll up"><Tri dir="up" /></ArrowCell>
                <VThumb $height={164}><Grip vertical /></VThumb>
              </ThumbGroup>
              <ArrowCell aria-label="Scroll down"><Tri dir="down" /></ArrowCell>
            </VTrack>
            <HTrack>
              <ArrowCell aria-label="Scroll left"><Tri dir="left" /></ArrowCell>
              <HThumb $width="45%"><Grip /></HThumb>
              <Spacer />
              <ArrowCell aria-label="Scroll right"><Tri dir="right" /></ArrowCell>
            </HTrack>
          </CanvasArea>
        </Diagram>
      </Column>
      <AdditionsPanel height={424} row={26} tab={14} userFields="username, email, password, c..." />
    </Workspace>
    <StatusBar $height={22}>Ready</StatusBar>
    <Desktop time="10:04" />
    <Tip />
  </Window>
);

export default function App() {
  return (
    <>
      <Global />
      <Page>
        <PageHeader>Pengambilan Data Dengan SQL Select</PageHeader>
        <Step $top={4} $bottom={13}><StepNumber $small>2.</StepNumber>Klik tanda + pada models untuk memilih Create new EER MODEL</Step>
        <Figure $right={0}><ModelWindow /></Figure>
        <Step $top={53} $bottom={52}><StepNumber>3.</StepNumber>Pilih Add Diagram</Step>
        <Figure $right={5}><DiagramWindow /></Figure>
        <PageFooter>
          <div><p>Modul Praktikum Implementasi Basis Data</p><p>Program Studi Teknik Informatika Sekolah Tinggi Teknologi Bontang</p></div>
          <span>25</span>
        </PageFooter>
      </Page>
    </>
  );
}
